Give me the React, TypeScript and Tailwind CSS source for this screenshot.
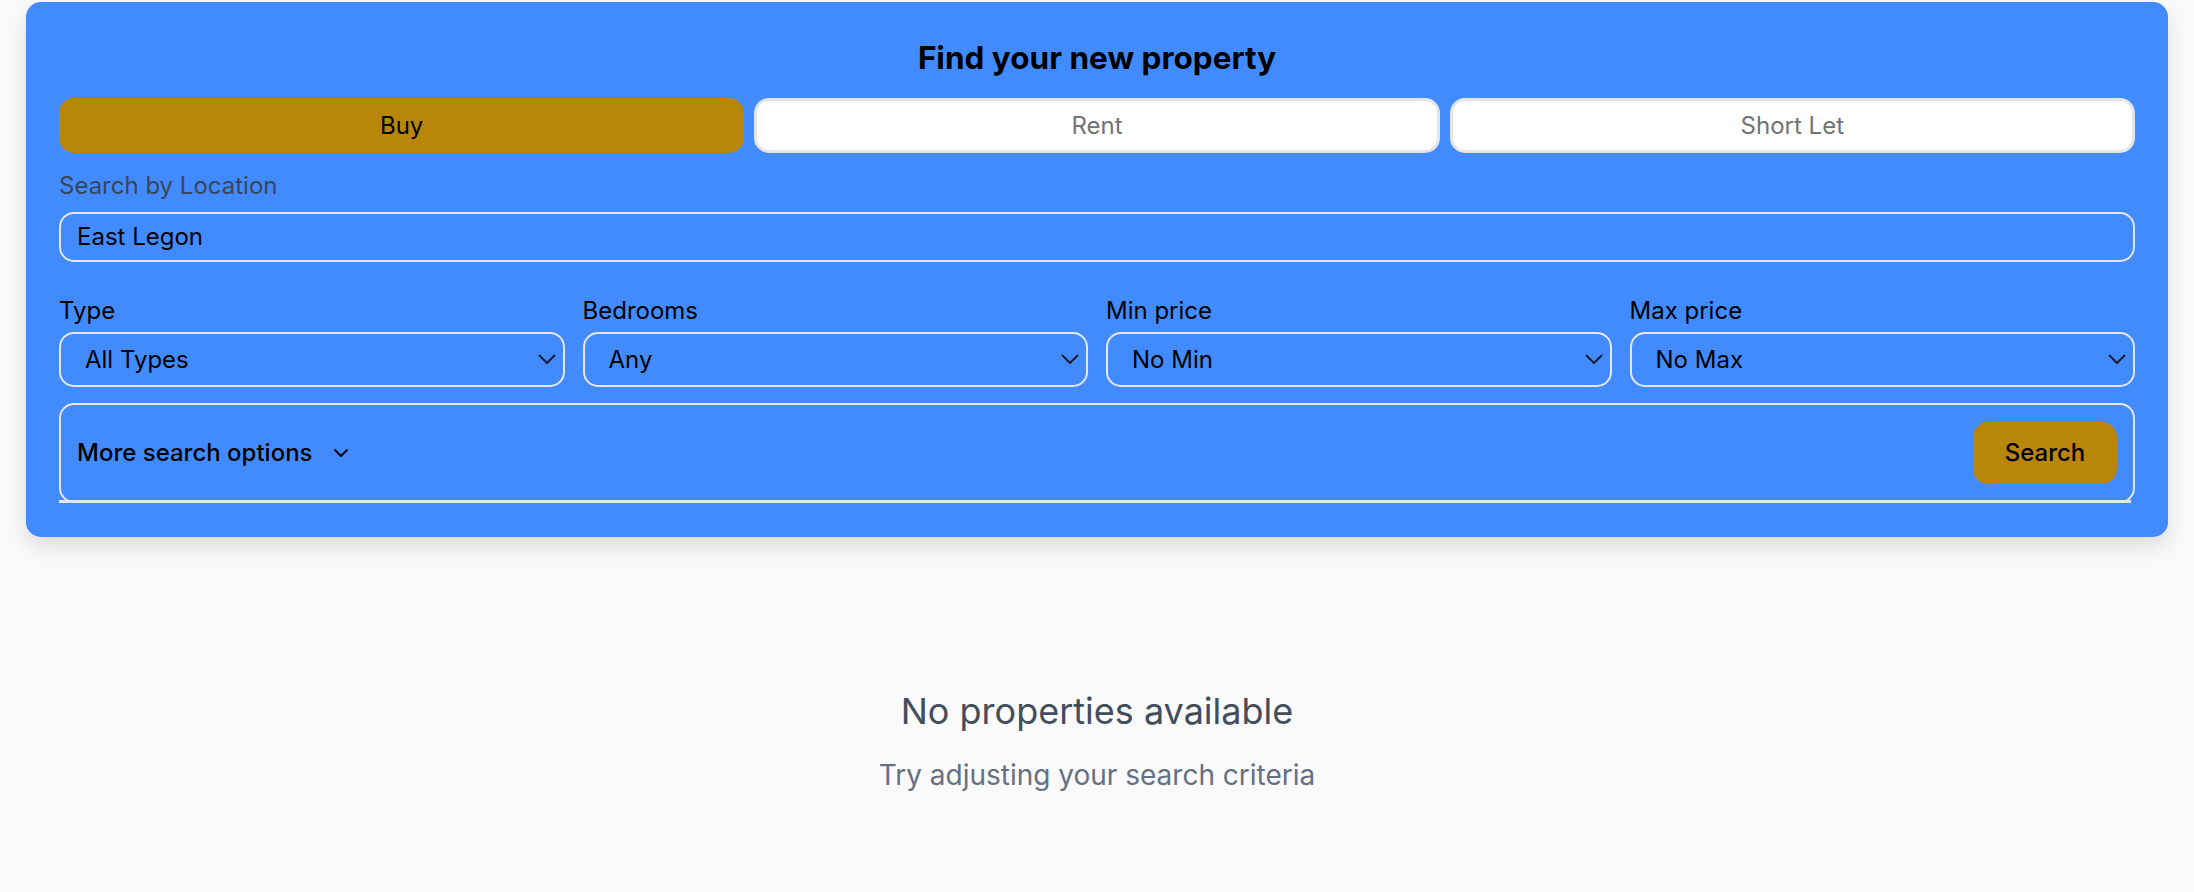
import React from 'react';
import { ChevronDown } from "lucide-react";

const tabs = ["Buy", "Rent", "Short Let"];

const filters = [
  { label: "Type", value: "All Types" },
  { label: "Bedrooms", value: "Any" },
  { label: "Min price", value: "No Min" },
  { label: "Max price", value: "No Max" },
];

function SelectChevron() {
  return (
    <svg width="18" height="11" viewBox="0 0 18 11" fill="none" className="shrink-0">
      <path d="M1.5 1.5l7.5 7.5 7.5-7.5" stroke="#111827" strokeWidth="1.8" strokeLinecap="round" strokeLinejoin="round" />
    </svg>
  );
}

export default function App() {
  return (
    <div className="min-h-[892px] bg-[#fafafa] font-['Inter',sans-serif] text-black">
      <div className="px-[26px] pt-[2px]">
        <div className="rounded-[15px] bg-[#428bff] px-[33px] pt-[35px] pb-[34px] shadow-[0_10px_22px_rgba(0,0,0,0.12)]">
          <h1 className="mb-[19px] text-center text-[31.5px] font-bold leading-[42px]">
            Find your new property
          </h1>

          <div className="grid grid-cols-3 gap-[10px]">
            {tabs.map((tab, i) => (
              <button
                key={tab}
                className={
                  i === 0
                    ? "h-[55px] rounded-[15px] border-[3px] border-[#b8860b] bg-[#b8860b] text-[24px] leading-[36px] text-black"
                    : "h-[55px] rounded-[15px] border-[3px] border-[#e5e5e5] bg-white text-[24px] leading-[36px] text-[#737373]"
                }
              >
                {tab}
              </button>
            ))}
          </div>

          <div className="mt-[15px] mb-[8px] text-[24px] leading-[36px] text-[#3b4458]">
            Search by Location
          </div>
          <div className="flex h-[50px] items-center rounded-[15px] border-2 border-[#e5e7eb] px-[16px] text-[24px]">
            East Legon
          </div>

          <div className="mt-[31px] grid grid-cols-4 gap-[18px]">
            {filters.map((f) => (
              <div key={f.label}>
                <div className="mb-[3px] text-[24px] leading-[36px]">{f.label}</div>
                <div className="flex h-[55px] items-center justify-between rounded-[15px] border-2 border-[#e5e7eb] pl-[24px] pr-[7px] text-[24px]">
                  <span>{f.value}</span>
                  <SelectChevron />
                </div>
              </div>
            ))}
          </div>

          <div className="relative mt-[16px]">
            <div className="flex h-[100px] items-center justify-between rounded-[15px] border-2 border-[#e5e7eb] pl-[16px] pr-[16px]">
              <div className="flex items-center gap-[16px] text-[24px] font-medium">
                <span>More search options</span>
                <ChevronDown size={24} strokeWidth={2} />
              </div>
              <button className="h-[62px] w-[144px] rounded-[15px] bg-[#b8860b] text-[24px] font-medium text-black">
                Search
              </button>
            </div>
            <div className="absolute bottom-0 left-0 right-[4px] h-[3px] bg-[#e5e7eb]" />
          </div>
        </div>
      </div>

      <div className="mt-[147px] flex flex-col items-center">
        <div className="text-[36px] leading-[54px] text-[#434d5d]">No properties available</div>
        <div className="mt-[17px] text-[28px] leading-[40px] text-[#667085]">
          Try adjusting your search criteria
        </div>
      </div>
    </div>
  );
}
